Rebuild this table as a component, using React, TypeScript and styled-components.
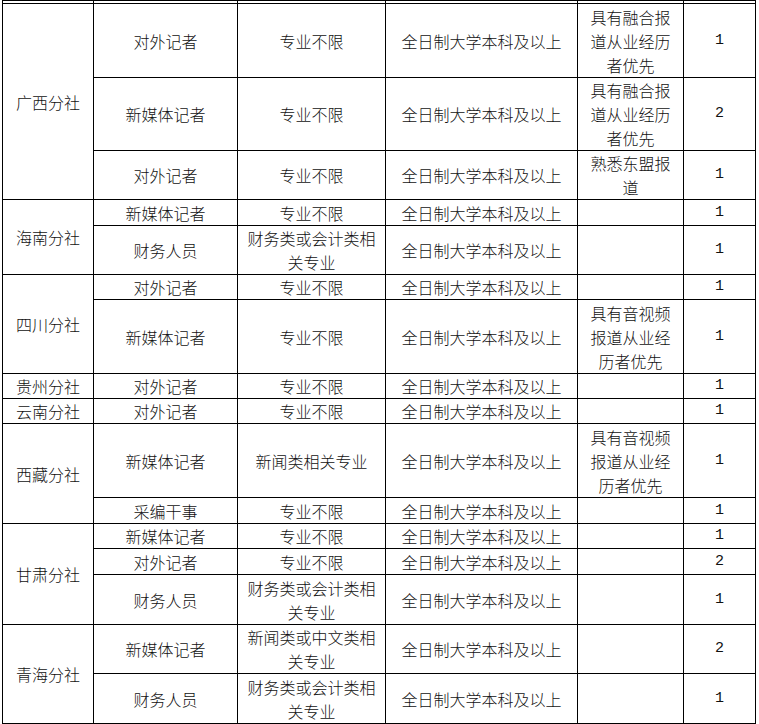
import React from "react";
import styled, { createGlobalStyle } from "styled-components";

const GlobalStyle = createGlobalStyle`
  html, body {
    margin: 0;
    padding: 0;
    background: #fff;
  }
  body {
    font-family: "Noto Sans CJK SC", "Noto Sans", sans-serif;
    color: #111;
  }
`;

const Page = styled.div`
  width: 759px;
  height: 724px;
  overflow: hidden;
  background: #fff;
`;

const Sheet = styled.table`
  margin-left: 2px;
  width: 754px;
  border-collapse: collapse;
  table-layout: fixed;
  font-size: 16px;
  line-height: 24px;
  font-weight: 300;
`;

const Row = styled.tr<{ $h: number }>`
  height: ${(p) => p.$h}px;
`;

const Cell = styled.td`
  border: 1px solid #000;
  padding: 0 6px;
  text-align: center;
  vertical-align: middle;
  overflow: hidden;
`;

const NumCell = styled(Cell)`
  font-family: "Liberation Mono", "DejaVu Sans Mono", monospace;
  font-size: 15px;
  font-weight: 400;
`;

const EdgeCell = styled.td`
  border: 1px solid #000;
  padding: 0;
  height: 1px;
  line-height: 0;
  font-size: 0;
`;

type Job = {
  pos: string;
  major: string;
  note?: string;
  n: number;
  h: number;
};

type Branch = { name: string; jobs: Job[] };

const EDU = "全日制大学本科及以上";
const ANY = "专业不限";
const FIN = "财务类或会计类相关专业";
const MIX = "具有融合报道从业经历者优先";
const AV = "具有音视频报道从业经历者优先";

const branches: Branch[] = [
  {
    name: "广西分社",
    jobs: [
      { pos: "对外记者", major: ANY, note: MIX, n: 1, h: 74 },
      { pos: "新媒体记者", major: ANY, note: MIX, n: 2, h: 73 },
      { pos: "对外记者", major: ANY, note: "熟悉东盟报道", n: 1, h: 49 },
    ],
  },
  {
    name: "海南分社",
    jobs: [
      { pos: "新媒体记者", major: ANY, n: 1, h: 26 },
      { pos: "财务人员", major: FIN, n: 1, h: 49 },
    ],
  },
  {
    name: "四川分社",
    jobs: [
      { pos: "对外记者", major: ANY, n: 1, h: 25 },
      { pos: "新媒体记者", major: ANY, note: AV, n: 1, h: 74 },
    ],
  },
  { name: "贵州分社", jobs: [{ pos: "对外记者", major: ANY, n: 1, h: 25 }] },
  { name: "云南分社", jobs: [{ pos: "对外记者", major: ANY, n: 1, h: 25 }] },
  {
    name: "西藏分社",
    jobs: [
      { pos: "新媒体记者", major: "新闻类相关专业", note: AV, n: 1, h: 74 },
      { pos: "采编干事", major: ANY, n: 1, h: 26 },
    ],
  },
  {
    name: "甘肃分社",
    jobs: [
      { pos: "新媒体记者", major: ANY, n: 1, h: 24 },
      { pos: "对外记者", major: ANY, n: 2, h: 26 },
      { pos: "财务人员", major: FIN, n: 1, h: 50 },
    ],
  },
  {
    name: "青海分社",
    jobs: [
      { pos: "新媒体记者", major: "新闻类或中文类相关专业", n: 2, h: 49 },
      { pos: "财务人员", major: FIN, n: 1, h: 50 },
    ],
  },
];

const widths = [91, 144, 148, 192, 106, 72];

function EdgeRow({ h }: { h: number }) {
  return (
    <Row $h={h}>
      {widths.map((_, i) => (
        <EdgeCell key={i} />
      ))}
    </Row>
  );
}

export default function App() {
  return (
    <Page>
      <GlobalStyle />
      <Sheet>
        <colgroup>
          {widths.map((w, i) => (
            <col key={i} style={{ width: w }} />
          ))}
        </colgroup>
        <tbody>
          <EdgeRow h={3} />
          {branches.map((b) =>
            b.jobs.map((j, i) => (
              <Row key={b.name + i} $h={j.h}>
                {i === 0 && <Cell rowSpan={b.jobs.length}>{b.name}</Cell>}
                <Cell>{j.pos}</Cell>
                <Cell>{j.major}</Cell>
                <Cell>{EDU}</Cell>
                <Cell>{j.note}</Cell>
                <NumCell>{j.n}</NumCell>
              </Row>
            ))
          )}
          <EdgeRow h={20} />
        </tbody>
      </Sheet>
    </Page>
  );
}
